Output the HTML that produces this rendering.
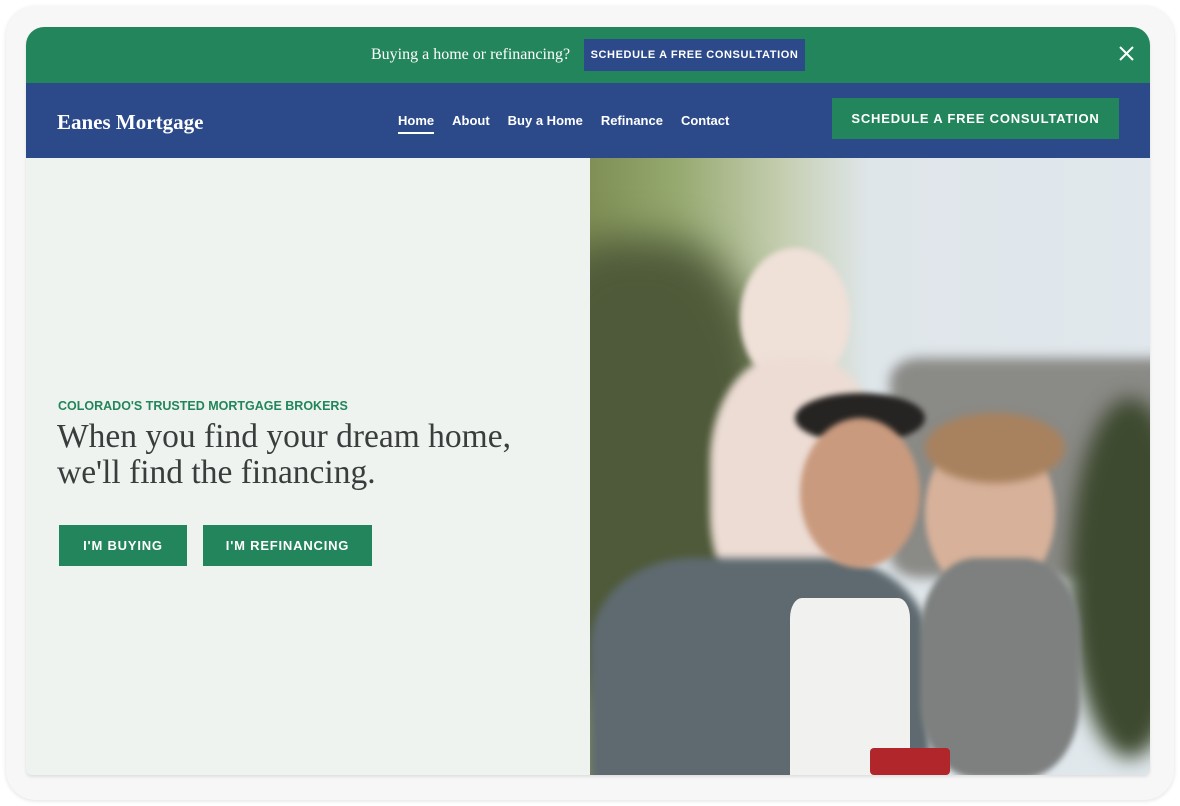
<!DOCTYPE html>
<html><head><meta charset="utf-8"><style>
*{margin:0;padding:0;box-sizing:border-box}
html,body{width:1180px;height:806px;overflow:hidden}
body{background:#fff;position:relative;font-family:"Liberation Sans",sans-serif}
.dev{position:absolute;left:6px;top:6px;width:1168px;height:794px;border-radius:30px;background:#f7f7f7;box-shadow:0 1px 4px rgba(0,0,0,.12);overflow:hidden}
.scr{position:absolute;left:26px;top:27px;width:1124px;height:748px;border-radius:18px 18px 6px 6px;overflow:hidden;background:#eef3f0;box-shadow:0 2px 3px rgba(0,0,0,.1)}
.top{position:absolute;left:0;top:0;width:100%;height:56px;background:#23855b}
.top .q{position:absolute;left:345px;top:19px;color:#fff;font-family:"Liberation Serif",serif;font-size:16px}
.top .b{position:absolute;left:558px;top:12px;width:221px;height:32px;background:#2c4a8a;color:#fff;font-size:11px;font-weight:bold;letter-spacing:.6px;text-align:center;line-height:32px}
.top .x{position:absolute;left:1093px;top:19px}
.nav{position:absolute;left:0;top:56px;width:100%;height:75px;background:#2c4a8a}
.logo{position:absolute;left:31px;top:27px;color:#fff;font-family:"Liberation Serif",serif;font-size:21px;font-weight:bold}
.links{position:absolute;left:372px;top:30px;color:#fff;font-size:13px;font-weight:bold;white-space:nowrap}
.links span{margin-right:18px;display:inline-block}
.links .h{border-bottom:2px solid #fff;padding-bottom:4px}
.nb{position:absolute;left:806px;top:15px;width:287px;height:41px;background:#23855b;color:#fff;font-size:13px;font-weight:bold;letter-spacing:.8px;text-align:center;line-height:41px}
.eb{position:absolute;left:32px;top:372px;color:#23855b;font-size:12.5px;font-weight:bold}
h1{position:absolute;left:31px;top:392px;color:#3a3d3c;font-family:"Liberation Serif",serif;font-weight:normal;font-size:33.5px;line-height:36px;white-space:nowrap}
.btn{position:absolute;top:498px;height:41px;background:#23855b;color:#fff;font-size:13px;font-weight:bold;letter-spacing:.8px;text-align:center;line-height:41px}
.ph{position:absolute;left:564px;top:131px;width:560px;height:617px;overflow:hidden;
background:linear-gradient(90deg,#7f8f55 0,#95a86e 15%,#c6cfb2 35%,#dfe6ea 50%,#e1e8ed 100%)}
.ph div{position:absolute;border-radius:50%}
</style></head><body>
<div class="dev"></div>
<div class="scr">
<div class="top"><div class="q">Buying a home or refinancing?</div><div class="b">SCHEDULE A FREE CONSULTATION</div>
<svg class="x" width="15" height="15" viewBox="0 0 15 15"><path d="M1 1L14 14M14 1L1 14" stroke="#fff" stroke-width="2"/></svg></div>
<div class="nav"><div class="logo">Eanes Mortgage</div>
<div class="links"><span class="h">Home</span><span>About</span><span>Buy a Home</span><span>Refinance</span><span>Contact</span></div>
<div class="nb">SCHEDULE A FREE CONSULTATION</div></div>
<div class="eb">COLORADO'S TRUSTED MORTGAGE BROKERS</div>
<h1>When you find your dream home,<br>we'll find the financing.</h1>
<div class="btn" style="left:33px;width:128px">I'M BUYING</div>
<div class="btn" style="left:177px;width:169px">I'M REFINANCING</div>
<div class="ph">
<div style="left:-80px;top:80px;width:260px;height:460px;background:#4f5a3a;border-radius:40%;filter:blur(20px)"></div>
<div style="left:300px;top:200px;width:300px;height:220px;background:#8a8a86;border-radius:10%;filter:blur(6px)"></div>
<div style="left:480px;top:240px;width:120px;height:360px;background:#3e4a30;filter:blur(10px)"></div>
<div style="left:150px;top:90px;width:110px;height:140px;background:#efe0d8;filter:blur(3px)"></div>
<div style="left:120px;top:200px;width:170px;height:260px;background:#ecdcd4;border-radius:40%;filter:blur(4px)"></div>
<div style="left:0px;top:400px;width:340px;height:300px;background:#5e6a70;border-radius:30%;filter:blur(4px)"></div>
<div style="left:200px;top:440px;width:120px;height:200px;background:#f1f1ef;border-radius:10%"></div>
<div style="left:205px;top:235px;width:130px;height:50px;background:#262422;filter:blur(3px)"></div>
<div style="left:210px;top:260px;width:120px;height:150px;background:#c99a7e;filter:blur(3px)"></div>
<div style="left:335px;top:270px;width:130px;height:170px;background:#d7b19a;filter:blur(3px)"></div>
<div style="left:335px;top:255px;width:140px;height:70px;background:#a8815e;filter:blur(4px)"></div>
<div style="left:330px;top:400px;width:160px;height:220px;background:#7d807f;border-radius:35%;filter:blur(3px)"></div>
<div style="left:280px;top:590px;width:80px;height:27px;background:#b0262a;border-radius:4px"></div>
</div>
</div>
</body></html>
